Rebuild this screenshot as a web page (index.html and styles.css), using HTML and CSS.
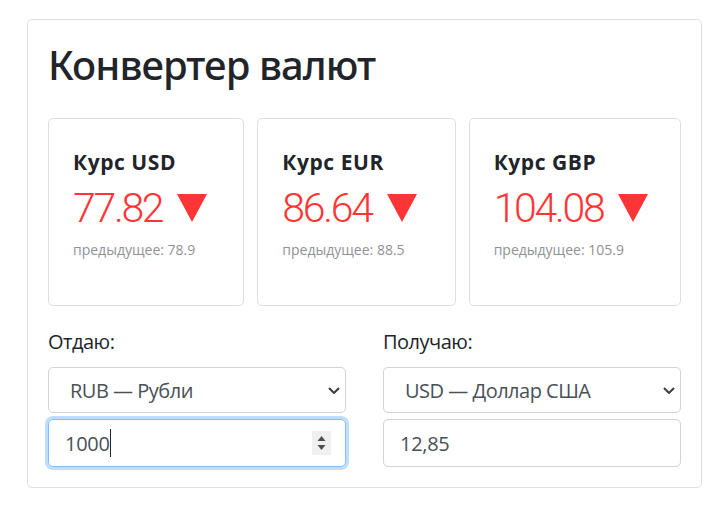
FILE: index.html
```html
<!DOCTYPE html>
<html lang="ru">
<head>
<meta charset="utf-8">
<title>Конвертер валют</title>
<link rel="stylesheet" href="styles.css">
</head>
<body>
<div class="page">
  <div class="panel">
    <h1 class="title">Конвертер валют</h1>
    <div class="rates">
      <div class="rate-card">
        <h5 class="rate-title">Курс USD</h5>
        <div class="rate-value"><span>77.82</span><svg class="down" viewBox="0 0 30 28"><polygon points="0,0 30,0 15,28"/></svg></div>
        <div class="rate-prev">предыдущее: 78.9</div>
      </div>
      <div class="rate-card">
        <h5 class="rate-title">Курс EUR</h5>
        <div class="rate-value"><span>86.64</span><svg class="down" viewBox="0 0 30 28"><polygon points="0,0 30,0 15,28"/></svg></div>
        <div class="rate-prev">предыдущее: 88.5</div>
      </div>
      <div class="rate-card">
        <h5 class="rate-title">Курс GBP</h5>
        <div class="rate-value"><span>104.08</span><svg class="down" viewBox="0 0 30 28"><polygon points="0,0 30,0 15,28"/></svg></div>
        <div class="rate-prev">предыдущее: 105.9</div>
      </div>
    </div>
    <div class="form-grid">
      <div class="field">
        <div class="label">Отдаю:</div>
        <div class="select"><span>RUB — Рубли</span><svg class="chevron" viewBox="0 0 12 7"><path d="M1 1l5 5 5-5"/></svg></div>
        <div class="input focused"><span>1000</span><span class="caret"></span>
          <span class="spinner"><svg viewBox="0 0 19 24"><polygon points="5.5,10 13.5,10 9.5,5"/><polygon points="5.5,14 13.5,14 9.5,19"/></svg></span>
        </div>
      </div>
      <div class="field">
        <div class="label">Получаю:</div>
        <div class="select"><span>USD — Доллар США</span><svg class="chevron" viewBox="0 0 12 7"><path d="M1 1l5 5 5-5"/></svg></div>
        <div class="input"><span>12,85</span></div>
      </div>
    </div>
  </div>
</div>
</body>
</html>
```

FILE: styles.css
```css
* { box-sizing: border-box; }
html, body { margin: 0; padding: 0; background: #fff; }
body {
  font-family: "Open Sans", "Noto Sans", sans-serif;
  color: #212529;
}
.page {
  padding: 19px 20px 0 27px;
}
.panel {
  border: 1px solid #dfdfdf;
  border-radius: 5px;
  padding: 21px 20px 20px 20px;
}
.title {
  margin: 0 0 29px 0;
  font-family: "Noto Sans", "Open Sans", sans-serif;
  font-size: 40px;
  line-height: 48px;
  font-weight: 500;
  letter-spacing: -0.9px;
}
.rates {
  display: grid;
  grid-template-columns: 196fr 198fr 212fr;
  gap: 13px;
}
.rate-card {
  min-width: 0;
  border: 1px solid #dfdfdf;
  border-radius: 5px;
  padding: 31px 24px 45px 24px;
}
.rate-title {
  margin: 0 0 10px 0;
  font-size: 21px;
  line-height: 24px;
  font-weight: 700;
  letter-spacing: 0.55px;
}
.rate-value {
  display: flex;
  align-items: center;
  font-family: Roboto, "Open Sans", sans-serif;
  font-size: 41px;
  line-height: 48px;
  font-weight: 300;
  letter-spacing: -2.3px;
  color: #ff3535;
  margin-bottom: 7px;
}
.down {
  width: 30px;
  height: 28px;
  margin-left: 15px;
  fill: #ff3535;
}
.rate-prev {
  font-size: 14px;
  line-height: 21px;
  color: #8f9297;
}
.form-grid {
  display: grid;
  grid-template-columns: 1fr 1fr;
  gap: 37px;
  margin-top: 21px;
}
.label {
  font-size: 20px;
  line-height: 30px;
  margin-bottom: 10px;
  letter-spacing: -0.5px;
}
.select {
  height: 46px;
  border: 1px solid #ced4da;
  border-radius: 5px;
  display: flex;
  align-items: center;
  padding: 0 5px 0 21px;
  font-size: 20px;
  letter-spacing: -0.5px;
  color: #495057;
  margin-bottom: 6px;
}
.chevron {
  margin-left: auto;
  width: 12px;
  height: 7px;
  fill: none;
  stroke: #3c3c3c;
  stroke-width: 2;
}
.input {
  height: 48px;
  border: 1px solid #ced4da;
  border-radius: 5px;
  display: flex;
  align-items: center;
  padding: 0 14px 0 16px;
  font-size: 20px;
  letter-spacing: -0.3px;
  color: #495057;
}
.input.focused {
  border-color: #80bdff;
  box-shadow: 0 0 0 3px rgba(0, 123, 255, 0.25);
}
.caret {
  width: 1px;
  height: 28px;
  background: #212529;
}
.spinner {
  margin-left: auto;
  width: 19px;
  height: 24px;
  background: #f0f0f0;
  display: flex;
}
.spinner svg {
  width: 19px;
  height: 24px;
  fill: #505050;
}
```
